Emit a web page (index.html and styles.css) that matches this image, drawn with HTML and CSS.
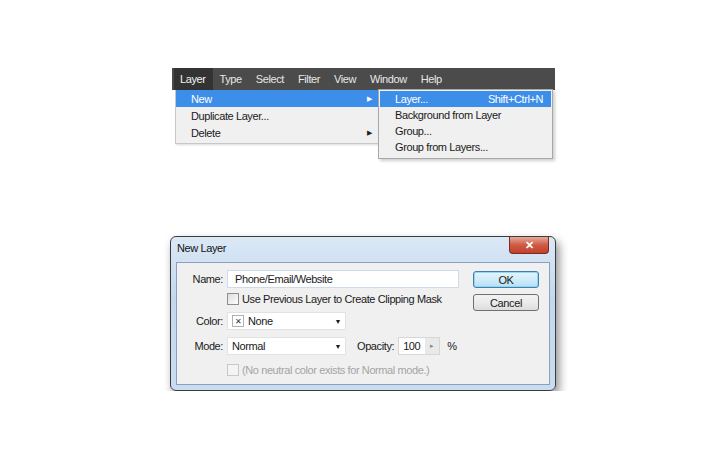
FILE: index.html
```html
<!DOCTYPE html>
<html lang="en">
<head>
    <meta charset="UTF-8">
    <title>New Layer</title>
    <link rel="stylesheet" href="styles.css">
</head>
<body>
    <div class="menu-area">
        <div class="menubar">
            <span class="menubar-item active">Layer</span>
            <span class="menubar-item">Type</span>
            <span class="menubar-item">Select</span>
            <span class="menubar-item">Filter</span>
            <span class="menubar-item">View</span>
            <span class="menubar-item">Window</span>
            <span class="menubar-item">Help</span>
        </div>
        <div class="menus">
            <div class="menu">
                <div class="menu-row selected"><span>New</span><span class="arrow">▶</span></div>
                <div class="menu-row"><span>Duplicate Layer...</span></div>
                <div class="menu-row"><span>Delete</span><span class="arrow">▶</span></div>
            </div>
            <div class="menu submenu">
                <div class="menu-row selected"><span>Layer...</span><span class="shortcut">Shift+Ctrl+N</span></div>
                <div class="menu-row"><span>Background from Layer</span></div>
                <div class="menu-row"><span>Group...</span></div>
                <div class="menu-row"><span>Group from Layers...</span></div>
            </div>
        </div>
    </div>

    <div class="dialog">
        <div class="titlebar">
            <span class="title">New Layer</span>
            <span class="close">✕</span>
        </div>
        <div class="panel">
            <div class="fields">
                <div class="field row-name">
                    <span class="label">Name:</span>
                    <div class="input name-input">Phone/Email/Website</div>
                </div>
                <div class="field row-clip">
                    <span class="label"></span>
                    <span class="check"></span>
                    <span>Use Previous Layer to Create Clipping Mask</span>
                </div>
                <div class="field row-color">
                    <span class="label">Color:</span>
                    <div class="input select">
                        <span class="swatch">✕</span><span class="select-text">None</span><span class="caret">▼</span>
                    </div>
                </div>
                <div class="field row-mode">
                    <span class="label">Mode:</span>
                    <div class="input select">
                        <span class="select-text">Normal</span><span class="caret">▼</span>
                    </div>
                    <span class="opacity-label">Opacity:</span>
                    <div class="input opacity">
                        <span class="opacity-value">100</span><span class="spin">▸</span>
                    </div>
                    <span class="percent">%</span>
                </div>
                <div class="field row-note disabled">
                    <span class="label"></span>
                    <span class="check"></span>
                    <span>(No neutral color exists for Normal mode.)</span>
                </div>
            </div>
            <div class="buttons">
                <div class="button default">OK</div>
                <div class="button">Cancel</div>
            </div>
        </div>
    </div>
</body>
</html>
```

FILE: styles.css
```css
* {
    margin: 0;
    padding: 0;
    box-sizing: border-box;
}

body {
    font-family: 'Liberation Sans', Arial, sans-serif;
    font-size: 11px;
    letter-spacing: -0.4px;
    color: #1a1a1a;
    background: #ffffff;
    padding: 68px 0 0 170px;
    white-space: nowrap;
}

/* Menu */
.menu-area {
    width: 383px;
    margin-left: 2px;
}

.menubar {
    display: flex;
    height: 22px;
    background: #4b4b4b;
    padding-left: 2px;
    align-items: stretch;
}

.menubar-item {
    color: #e8e8e8;
    padding: 0 7px 0 6px;
    display: flex;
    align-items: center;
    margin-right: 1px;
}

.menubar-item.active {
    background: #333333;
    color: #f4f4f4;
}

.menus {
    display: flex;
    align-items: flex-start;
}

.menu {
    width: 204px;
    margin-left: 3px;
    background: #f0f0f0;
    border: 1px solid #c8c8c8;
    border-top: none;
    padding-bottom: 2px;
    box-shadow: 1px 1px 2px rgba(0, 0, 0, 0.15);
}

.submenu {
    width: 175px;
    margin-left: -1px;
    margin-top: -1px;
    border: 1px solid #a8a8a8;
    padding: 1px 1px 3px;
    box-shadow: 2px 2px 3px rgba(0, 0, 0, 0.2);
}

.menu-row {
    display: flex;
    justify-content: space-between;
    align-items: center;
    height: 17px;
    padding: 0 6px 0 15px;
}

.submenu .menu-row {
    height: 16px;
    padding-left: 15px;
    padding-right: 8px;
}

.menu-row.selected {
    background: #3d8ee9;
    color: #ffffff;
}

.arrow {
    font-size: 7px;
    color: #222222;
}

.selected .arrow {
    color: #ffffff;
}

/* Dialog */
.dialog {
    width: 386px;
    height: 155px;
    margin-top: 77px;
    border: 1px solid #3c3c3c;
    border-radius: 6px;
    background: linear-gradient(#dbe8f6, #c3d8ef 40%, #c9dcf1);
    padding: 0 5px 5px;
    box-shadow: 3px 5px 10px rgba(0, 0, 0, 0.45);
    display: flex;
    flex-direction: column;
}

.titlebar {
    height: 25px;
    display: flex;
    justify-content: space-between;
    align-items: flex-start;
}

.title {
    margin-top: 5px;
    margin-left: 1px;
    color: #111111;
}

.close {
    width: 40px;
    height: 17px;
    margin-right: 1px;
    background: linear-gradient(#e7a999, #cf5a44 50%, #c0412c);
    border: 1px solid #7a2a22;
    border-top: none;
    border-radius: 0 0 4px 4px;
    color: #ffffff;
    font-weight: bold;
    font-size: 11px;
    display: flex;
    justify-content: center;
    align-items: center;
}

.panel {
    flex: 1;
    background: #f0f0f0;
    border: 1px solid #8aa1bd;
    display: flex;
    padding: 7px 10px 0 0;
}

.fields {
    flex: 1;
    display: flex;
    flex-direction: column;
}

.field {
    display: flex;
    align-items: center;
    height: 18px;
}

.row-clip {
    margin-top: 2px;
}

.row-color {
    margin-top: 4px;
}

.row-mode {
    margin-top: 7px;
}

.row-note {
    margin-top: 6px;
}

.label {
    width: 46px;
    text-align: right;
    margin-right: 4px;
}

.input {
    height: 18px;
    background: #ffffff;
    border: 1px solid #d6d6d6;
    display: flex;
    align-items: center;
}

.name-input {
    width: 232px;
    padding-left: 7px;
    border-color: #cfdbe8;
}

.check {
    width: 12px;
    height: 12px;
    border: 1px solid #8e8f8f;
    background: linear-gradient(135deg, #dcdcdc, #ffffff);
    margin-right: 3px;
}

.select {
    width: 119px;
    padding: 0 4px;
    border-color: #e2e2e2;
}

.select-text {
    flex: 1;
}

.swatch {
    width: 12px;
    height: 12px;
    border: 1px solid #b0b0b0;
    font-size: 8px;
    display: flex;
    justify-content: center;
    align-items: center;
    margin-right: 4px;
    color: #333333;
}

.caret {
    font-size: 7px;
}

.opacity-label {
    margin-left: 11px;
    margin-right: 4px;
}

.opacity {
    width: 42px;
    padding-left: 4px;
}

.opacity-value {
    flex: 1;
}

.spin {
    width: 14px;
    height: 16px;
    background: #e9e9e9;
    color: #8a8a8a;
    font-size: 7px;
    display: flex;
    justify-content: center;
    align-items: center;
}

.percent {
    margin-left: 7px;
}

.disabled {
    color: #a4a4a4;
}

.disabled .check {
    border-color: #c8c8c8;
    background: #f4f4f4;
}

.buttons {
    width: 66px;
    display: flex;
    flex-direction: column;
    gap: 6px;
    padding-top: 1px;
}

.button {
    height: 17px;
    border: 1px solid #707070;
    border-radius: 3px;
    background: linear-gradient(#f2f2f2, #ebebeb 50%, #dddddd);
    display: flex;
    justify-content: center;
    align-items: center;
}

.button.default {
    border-color: #3c7fb1;
    background: linear-gradient(#e5f4fc, #d0ecf9 50%, #b6dff5);
    box-shadow: inset 0 0 0 1px #97d6f3;
}
```
